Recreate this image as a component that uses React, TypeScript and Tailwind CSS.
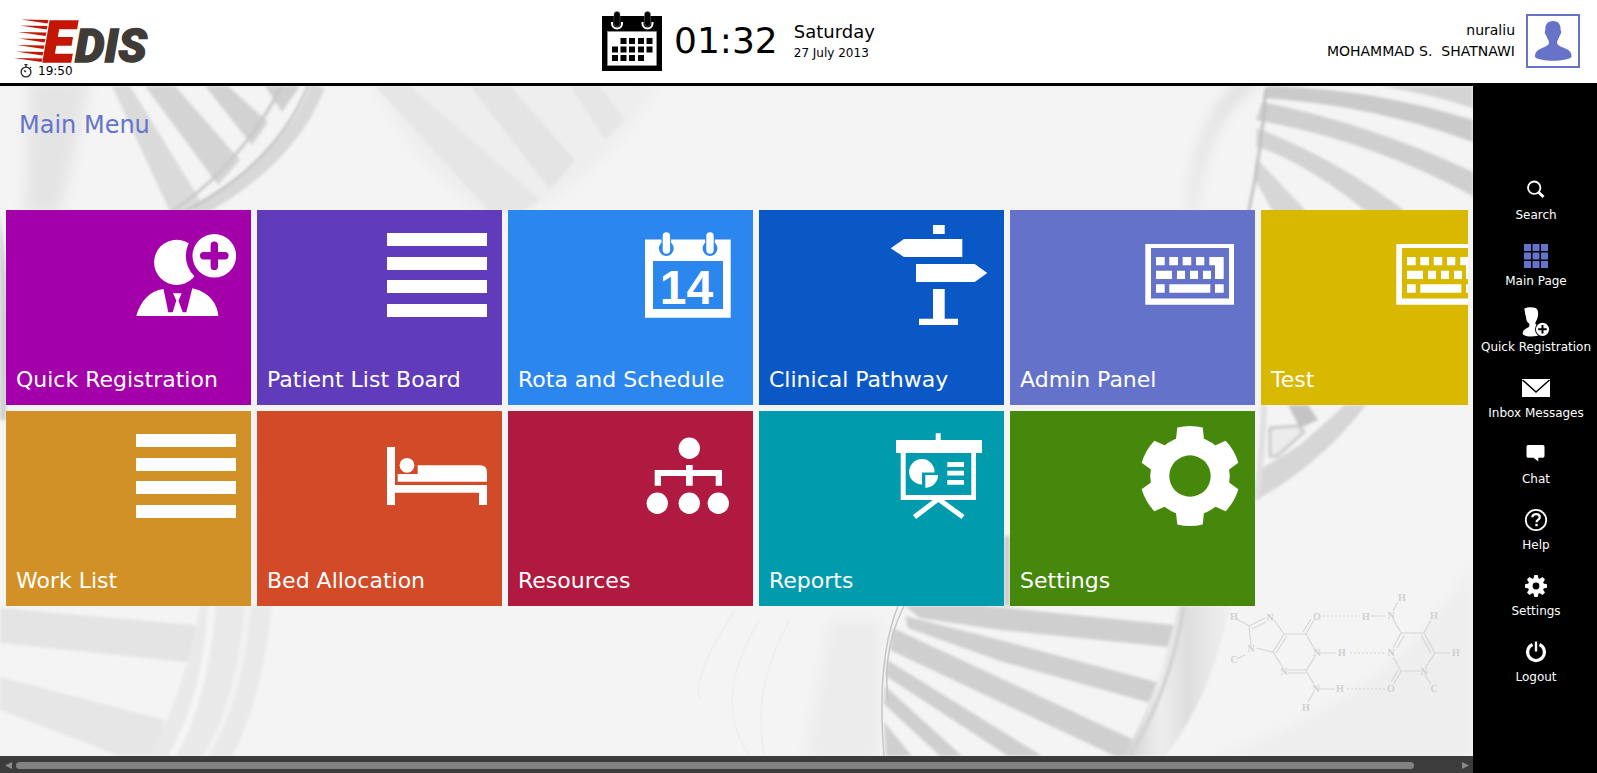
import type { ReactNode } from 'react';

function RegisterIcon() {
  return (
    <>
      <defs>
        <mask id="head-cut">
          <rect width="100" height="100" fill="#fff" />
          <circle cx="78.3" cy="30.8" r="28.5" fill="#000" />
        </mask>
      </defs>
      <circle cx="40.7" cy="37.3" r="22.6" mask="url(#head-cut)" />
      <path
        fillRule="evenodd"
        d="M78.3 9a21.8 21.8 0 1 0 0 43.6a21.8 21.8 0 1 0 0-43.6zM74.6 20.2a3.7 3.7 0 0 1 7.4 0v6.9h6.9a3.7 3.7 0 0 1 0 7.4h-6.9v6.9a3.7 3.7 0 0 1-7.4 0v-6.9h-6.9a3.7 3.7 0 0 1 0-7.4h6.9z"
      />
      <path d="M.3 91C4.5 76 14 65.5 27.5 64L32.3 87.3H36.7L40.3 75.5L37 68.3H45.7L42.5 75.5L46.7 87.3H50.3L56.3 63.3C71 66.5 81.5 77 82.3 91z" />
    </>
  );
}

function ListIcon() {
  return (
    <>
      <rect y="8" width="100" height="13" />
      <rect y="32" width="100" height="13" />
      <rect y="55" width="100" height="13" />
      <rect y="79" width="100" height="13" />
    </>
  );
}

function ScheduleIcon() {
  return (
    <>
      <path fillRule="evenodd" d="M7 14.5H92.7V92.7H7zM15 36V84H85V36z" />
      <g fill="#2b87ee">
        <circle cx="28.3" cy="23.5" r="7.4" />
        <circle cx="72" cy="23.5" r="7.4" />
        <rect x="23.5" y="10" width="9.6" height="14" />
        <rect x="67.2" y="10" width="9.6" height="14" />
      </g>
      <rect x="24.7" y="7.3" width="7.4" height="21.5" rx="3.7" />
      <rect x="68.3" y="7.3" width="7.4" height="21.5" rx="3.7" />
      <text
        x="48.5"
        y="78.5"
        textAnchor="middle"
        className="text-[48px] font-bold [font-family:'Liberation_Sans',sans-serif]"
      >
        14
      </text>
    </>
  );
}

function SignpostIcon() {
  return (
    <>
      <rect x="44" width="11.7" height="9" />
      <path d="M1.7 23.3L15 14H73.3V32H15z" />
      <path d="M27 39H85.7L98.3 48L85.7 57H27z" />
      <path d="M44 64H55.7V93.7H69V100H30V93.7H44z" />
    </>
  );
}

function KeyboardIcon() {
  return (
    <>
      <path fillRule="evenodd" d="M5.3 19H94V79.7H5.3zM11 23V73.5H89V23z" />
      <path d="M16 32h8.7v8.3H16zM29.3 32h8.7v8.3h-8.7zM42.7 32h8.5v8.3h-8.5zM56 32h8.3v8.3H56zM69.3 32H83.7V54H75V40.3H69.3z" />
      <path d="M16 45.7h16V54H16zM37 45.7h8V54h-8zM50 45.7h8V54h-8zM63 45.7h8V54h-8z" />
      <path d="M16 59.3h8.7v8.4H16zM29.3 59.3h41v8.4h-41zM75 59.3h8.7v8.4H75z" />
    </>
  );
}

function BedIcon() {
  return (
    <>
      <path d="M0 21H8V59H100V79H92V66.7H8V79H0z" />
      <circle cx="20" cy="39.3" r="7.4" />
      <path d="M10.7 48H30.7V39.3H93Q100 39.3 100 46.5V55.7H10.7z" />
    </>
  );
}

function OrgIcon() {
  return (
    <>
      <circle cx="51.3" cy="22.3" r="10.7" />
      <path d="M48 39H54.7V44H84V59.7H77.7V50H54.7V59.7H48V50H23V59.7H16.7V44H48z" />
      <circle cx="19.3" cy="77.3" r="10.7" />
      <circle cx="51.3" cy="77.3" r="10.7" />
      <circle cx="80.3" cy="77.3" r="10.7" />
    </>
  );
}

function PresentationIcon() {
  return (
    <>
      <path
        fillRule="evenodd"
        d="M46.7 7.3H51.7V14H93V27H87V74H11.7V27H7V14H46.7zM16.7 27V69H82.3V27z"
      />
      <path d="M49.3 73L25.5 91M49.3 73L74 91" stroke="currentColor" strokeWidth="5" />
      <path d="M33 46.5V58.5A12.7 12.7 0 1 1 45.5 46.5z" />
      <path d="M36.3 49H49A12.7 12.7 0 0 1 36.3 61.8z" />
      <path d="M58.3 36H75v5H58.3zM58.3 44.7H75v4.8H58.3zM58.3 54H75v4.8H58.3z" />
    </>
  );
}

function GearIcon() {
  const tooth = 'M-14.5-32L-12.7-48.5Q0-51.5 12.7-48.5L14.5-32z';
  return (
    <>
      <defs>
        <mask id="gear-hole">
          <rect width="100" height="100" fill="#fff" />
          <circle cx="50" cy="50" r="20.7" fill="#000" />
        </mask>
      </defs>
      <g mask="url(#gear-hole)">
        <g transform="translate(50 50)">
          <circle r="39.8" />
          {[0, 60, 120, 180, 240, 300].map((angle) => (
            <path key={angle} d={tooth} transform={`rotate(${angle})`} />
          ))}
        </g>
      </g>
    </>
  );
}

type Tile = { label: string; color: string; icon: () => ReactNode };

const tileRows: Tile[][] = [
  [
    { label: 'Quick Registration', color: 'bg-[#a400aa]', icon: RegisterIcon },
    { label: 'Patient List Board', color: 'bg-[#603bba]', icon: ListIcon },
    { label: 'Rota and Schedule', color: 'bg-[#2b87ee]', icon: ScheduleIcon },
    { label: 'Clinical Pathway', color: 'bg-[#0a58c6]', icon: SignpostIcon },
    { label: 'Admin Panel', color: 'bg-[#6473c9]', icon: KeyboardIcon },
    { label: 'Test', color: 'bg-[#d9b800]', icon: KeyboardIcon },
  ],
  [
    { label: 'Work List', color: 'bg-[#d29126]', icon: ListIcon },
    { label: 'Bed Allocation', color: 'bg-[#d24a27]', icon: BedIcon },
    { label: 'Resources', color: 'bg-[#b11a40]', icon: OrgIcon },
    { label: 'Reports', color: 'bg-[#009cae]', icon: PresentationIcon },
    { label: 'Settings', color: 'bg-[#46880c]', icon: GearIcon },
  ],
];

function MenuTile({ label, color, icon: Icon }: Tile) {
  return (
    <button
      type="button"
      className={`flex h-[195px] w-[245px] shrink-0 flex-col justify-between pt-[15px] pr-[15px] pb-[9px] pl-2.5 text-left text-white ${color}`}
    >
      <svg viewBox="0 0 100 100" className="size-[100px] self-end" fill="currentColor" aria-hidden="true">
        <Icon />
      </svg>
      <span className="text-[22px] leading-8 whitespace-nowrap">{label}</span>
    </button>
  );
}

function SearchGlyph() {
  return (
    <svg width="30" height="30" viewBox="0 0 30 30" fill="none" stroke="currentColor" aria-hidden="true">
      <circle cx="13.2" cy="12.7" r="6.2" strokeWidth="1.8" />
      <path d="M17.8 17.5L22.5 22" strokeWidth="3" />
    </svg>
  );
}

function GridGlyph() {
  return (
    <svg width="30" height="30" viewBox="0 0 30 30" fill="#6673ca" aria-hidden="true">
      {[3, 11.5, 20].map((y) => [3, 11.5, 20].map((x) => <rect key={`${x}-${y}`} x={x} y={y} width="7" height="7" />))}
    </svg>
  );
}

function PersonAddGlyph() {
  return (
    <svg width="30" height="30" viewBox="0 0 30 30" fill="currentColor" aria-hidden="true">
      <path d="M3.5 1.5C7-.3 14.5-.5 16.3 2.5C17.5 5 17.3 8.500 16.600 10.500C16 13 14.500 14.500 14.300 16.500C15 18.500 18.500 18.500 20 19.500V28C14 30 5 30 2 27.500C1 25 3 22.500 6 21C8.500 20 9 18 8 16.500C5.500 14.500 5 12 5 9.500C4 7.500 4 5.500 3.800 4C3.500 3 3.200 2 3.500 1.500z" />
      <circle cx="21.5" cy="22.3" r="7.6" fill="#000" />
      <circle cx="21.5" cy="22.3" r="6.6" />
      <path d="M21.5 18V26.600M17.200 22.300H25.800" stroke="#000" strokeWidth="2" />
    </svg>
  );
}

function MailGlyph() {
  return (
    <svg width="30" height="30" viewBox="0 0 30 30" aria-hidden="true">
      <rect x="1" y="6" width="28" height="18" fill="currentColor" />
      <path d="M1.5 7L15 19L28.5 7" fill="none" stroke="#000" strokeWidth="1.5" />
    </svg>
  );
}

function ChatGlyph() {
  return (
    <svg width="30" height="30" viewBox="0 0 30 30" fill="currentColor" aria-hidden="true">
      <path d="M7 6H22Q23.5 6 23.5 7.5V17Q23.5 18.7 22 18.7H17.3V22.5L12.500 18.700H7Q5.500 18.700 5.500 17V7.500Q5.500 6 7 6z" />
    </svg>
  );
}

function HelpGlyph() {
  return (
    <svg width="30" height="30" viewBox="0 0 30 30" fill="none" stroke="currentColor" aria-hidden="true">
      <circle cx="15" cy="15" r="10.2" strokeWidth="1.8" />
      <path d="M11.3 12.2C11.3 8.2 18.8 8.2 18.8 12.3C18.8 14.7 15.5 14.7 15.5 17.3" strokeWidth="2.3" />
      <path d="M14.3 18.8H16.7V21.2H14.3z" fill="currentColor" stroke="none" />
    </svg>
  );
}

function CogGlyph() {
  return (
    <svg width="30" height="30" viewBox="0 0 30 30" aria-hidden="true">
      <g transform="translate(15 15)" fill="currentColor">
        <circle r="8" />
        {[0, 45, 90, 135, 180, 225, 270, 315].map((angle) => (
          <path key={angle} d="M-2.8-6L-1.7-11H1.7L2.8-6z" transform={`rotate(${angle})`} />
        ))}
        <circle r="3.4" fill="#000" />
      </g>
    </svg>
  );
}

function PowerGlyph() {
  return (
    <svg width="30" height="30" viewBox="0 0 30 30" fill="none" stroke="currentColor" aria-hidden="true">
      <path d="M11.500 7.500A8.400 8.400 0 1 0 18.500 7.500" strokeWidth="3.200" />
      <path d="M15 4.500V14.500" strokeWidth="2.400" />
    </svg>
  );
}

const sideItems: { label: string; icon: () => ReactNode }[] = [
  { label: 'Search', icon: SearchGlyph },
  { label: 'Main Page', icon: GridGlyph },
  { label: 'Quick Registration', icon: PersonAddGlyph },
  { label: 'Inbox Messages', icon: MailGlyph },
  { label: 'Chat', icon: ChatGlyph },
  { label: 'Help', icon: HelpGlyph },
  { label: 'Settings', icon: CogGlyph },
  { label: 'Logout', icon: PowerGlyph },
];

function Logo() {
  const streaks = [
    [21, 48.5, 19.5],
    [20, 47.5, 25.5],
    [18, 46.5, 32],
    [19, 45.5, 38.5],
    [17, 44.5, 45],
    [16, 43.5, 51.5],
    [14, 42.5, 58],
  ];
  return (
    <svg width="150" height="64" viewBox="0 0 150 64" className="overflow-visible" role="img" aria-label="EDIS">
      <g fill="#c41605">
        {streaks.map(([x1, x2, y]) => (
          <path key={y} d={`M${x1} ${y}L${x2} ${y + 0.5}L${x2 - 1} ${y + 4}z`} />
        ))}
      </g>
      <text y="61.5" strokeWidth="1.4" className="italic [font-family:Roboto,sans-serif] [font-weight:900]">
        <tspan x="43" className="fill-[#c41605] stroke-[#c41605] text-[58px]">E</tspan>
        <tspan x="75" className="fill-[#403b37] stroke-[#403b37] text-[47px]">DIS</tspan>
      </text>
    </svg>
  );
}

function Stopwatch() {
  return (
    <svg width="12" height="14" viewBox="0 0 12 14" fill="none" stroke="#222" aria-hidden="true">
      <circle cx="6" cy="8" r="4.9" strokeWidth="1.3" />
      <path d="M4.5.7H7.5M6 .7V3M10 3L11 4M6 8L4 6.5" strokeWidth="1.3" />
    </svg>
  );
}

function HeaderCalendar() {
  return (
    <svg viewBox="0 0 60 60" className="size-[60px] overflow-visible" aria-hidden="true">
      <rect y="4" width="60" height="55" />
      <rect x="5.5" y="19.5" width="49" height="34" fill="#fff" stroke="#999" strokeWidth=".5" />
      <path d="M10 10V11.5A5 5 0 0 0 20 11.5V10" fill="none" stroke="#fff" strokeWidth="2" />
      <path d="M40.5 10V11.5A5 5 0 0 0 50.5 11.5V10" fill="none" stroke="#fff" strokeWidth="2" />
      <rect x="12" y="-.5" width="6" height="15" rx="3" stroke="#777" strokeWidth=".5" />
      <rect x="42.5" y="-.5" width="6" height="15" rx="3" stroke="#777" strokeWidth=".5" />
      <path d="M18.500 26h6v6h-6zM27 26h6v6h-6zM36 26h6v6h-6zM44.500 26h6v6h-6zM10 34.500h6v6h-6zM18.500 34.500h6v6h-6zM27 34.500h6v6h-6zM36 34.500h6v6h-6zM44.500 34.500h6v6h-6zM10 43h6v6h-6zM18.500 43h6v6h-6zM27 43h6v6h-6zM36 43h6v6h-6z" />
    </svg>
  );
}

function Avatar() {
  return (
    <svg viewBox="0 0 50 50" className="size-[54px] shrink-0 border-2 border-[#6673c8]" fill="#6673c8" aria-hidden="true">
      <path d="M25 5C31 5 33 9 32.500 14C33.500 14.500 33.500 18 32 19C31 22.500 29 24 29 27C29.500 30 35 31 39.500 33.500C43 35.500 43.500 38.500 43.500 41C38 46 12 46 7 41C7 38.500 7.500 35.500 11 33.500C15.500 31 20.500 30 21 27C21 24 19 22.500 18 19C16.500 18 16.500 14.500 17.500 14C17 9 19 5 25 5z" />
    </svg>
  );
}

function Helix() {
  return (
    <svg
      viewBox="0 86 1473 670"
      preserveAspectRatio="xMinYMin slice"
      className="absolute inset-0 size-full"
      aria-hidden="true"
    >
      <defs>
        <filter id="soft" x="-10%" y="-10%" width="120%" height="120%">
          <feGaussianBlur stdDeviation="1.6" />
        </filter>
        <filter id="haze" x="-20%" y="-20%" width="140%" height="140%">
          <feGaussianBlur stdDeviation="7" />
        </filter>
        <linearGradient id="strand" x1="0" y1="0" x2="1" y2="0">
          <stop offset="0" stopColor="#d2d2d2" />
          <stop offset=".35" stopColor="#ededed" />
          <stop offset=".6" stopColor="#dedede" />
          <stop offset="1" stopColor="#f0f0f0" />
        </linearGradient>
      </defs>
      <rect y="86" width="1473" height="670" fill="#f4f4f4" />

      <g filter="url(#haze)">
        <path d="M30 80H90L60 215H25z" fill="#e4e4e4" />
        <path d="M370 80H660Q620 160 530 215H480Q410 160 370 80z" fill="#eeeeee" />
        <path d="M1195 215Q1200 120 1262 80H1240Q1190 130 1190 215z" fill="#dcdcdc" />
        <path d="M830 620H880L880 760H805z" fill="#ececec" />
        <path d="M1473 560Q1400 700 1200 760H1473z" fill="#eeeeee" />
      </g>

      <g filter="url(#soft)">
        <path d="M0 608L195 625V663L0 643z" fill="#e4e4e4" />
        <path d="M0 677L165 720L155 756H120L0 710z" fill="#e6e6e6" />
        <path d="M200 606H272Q262 700 232 756H150Q185 690 200 606z" fill="#e9e9e9" />
        <path d="M212 606Q205 700 172 756" fill="none" stroke="#f5f5f5" strokeWidth="7" />
        <path d="M248 606Q240 700 206 756" fill="none" stroke="#f2f2f2" strokeWidth="6" />

        <path d="M112 86H130L200 200L190 212H170z" fill="#dadada" />
        <path d="M145 86H175L240 160L218 185z" fill="#d4d4d4" />
        <path d="M205 86H228L268 122L252 145z" fill="#d2d2d2" />
        <path d="M265 86H300L282 112z" fill="#d0d0d0" />
        <path d="M318 86Q290 160 195 212" fill="none" stroke="#d8d8d8" strokeWidth="14" />
        <path d="M308 86Q275 165 184 212" fill="none" stroke="#bdbdbd" strokeWidth="2" />
        <path d="M282 86Q240 165 172 212" fill="none" stroke="#c8c8c8" strokeWidth="3" />
        <path d="M0 215Q12 300 6 420H0z" fill="#d0d0d0" />
        <path d="M375 86H410L540 200L520 212H490z" fill="#e6e6e6" />
        <path d="M470 86H510L575 160L550 190z" fill="#e4e4e4" />
        <path d="M570 86H600L625 120L605 140z" fill="#e6e6e6" />

        <path d="M1268 86Q1370 88 1473 120V142Q1370 104 1262 98z" fill="#cacaca" />
        <path d="M1262 102Q1370 124 1473 172V196Q1370 140 1256 120z" fill="#cfcfcf" />
        <path d="M1257 128Q1340 160 1410 215H1370Q1310 165 1256 146z" fill="#d3d3d3" />
        <path d="M1256 158L1310 215H1275L1254 178z" fill="#d6d6d6" />
        <path d="M1380 86H1473V108Q1430 94 1380 86z" fill="#d4d4d4" />
        <path d="M1266 88Q1262 150 1248 215" fill="none" stroke="#c0c0c0" strokeWidth="3" />

        <path d="M1366 405Q1320 465 1256 500V472L1300 445L1345 405z" fill="#d6d6d6" />
        <path d="M1288 405H1308L1318 420L1300 428z" fill="#c4c4c4" />
        <path d="M1270 428V456H1277L1304 432L1298 426z" fill="#ececec" stroke="#cacaca" strokeWidth="3" />
        <path d="M1264 405Q1262 460 1256 500" fill="none" stroke="#e0e0e0" strokeWidth="6" />
        <path d="M1004 536H1010V606H1004z" fill="#cdcdcd" />

        <g fill="#cfcfcf">
          <path d="M905 606H985L1174 625L1168 647L1000 630L920 618z" />
          <path d="M905 616L1000 640L1160 683L1154 704L1000 661L908 628z" />
          <path d="M893 628L1000 678L1134 740L1128 756H1115L1000 702L890 650z" />
          <path d="M887 660L1042 756H1008L886 676z" />
          <path d="M885 686L962 756H940L884 704z" />
          <path d="M884 722L912 756H886z" />
        </g>
        <path d="M1178 606H1230Q1210 700 1165 756H1124Q1160 690 1178 606z" fill="url(#strand)" />
        <path d="M1184 606Q1170 690 1130 756" fill="none" stroke="#d2d2d2" strokeWidth="4" />
      </g>
      <path d="M898 606Q876 660 884 756M904 606Q882 650 888 700" fill="none" stroke="#c6c6c6" strokeWidth="1.5" />
      <path
        d="M735 610Q690 680 700 700M760 620Q710 700 750 756M790 620Q750 690 765 756"
        fill="none"
        stroke="#efefef"
        strokeWidth="2"
      />

      <g fill="none" stroke="#d6d6d6" strokeWidth="1.2">
        <path d="M1237 619L1249 626L1251 645M1249 626L1265 618M1252 629L1266 622M1274 620L1284 634L1273 652L1256 648M1245 655L1237 659" />
        <path d="M1284 634H1306L1315 650M1287 636L1276 653M1273 652L1283 668M1288 670H1306M1288 673H1306M1306 671L1315 656M1306 634L1314 620M1303 632L1311 619M1320 653H1336M1306 671L1314 684M1319 689H1335M1314 692L1308 702" />
        <path d="M1371 616H1386M1393 611L1398 602M1393 619L1401 633H1424L1435 653L1425 668M1421 635L1431 653M1401 633L1393 648M1404 636L1397 648M1393 657L1401 671H1420M1401 671L1394 684M1398 670L1391 682M1424 633L1431 620M1435 653H1450M1425 675L1431 684" />
        <path d="M1323 616H1360M1350 653H1386M1347 689H1386" strokeDasharray="2 2" />
      </g>
      <g fill="#d0d0d0" textAnchor="middle" className="text-[10px] font-bold [font-family:'Liberation_Serif',serif]">
        <text x="1234" y="620">H</text>
        <text x="1270" y="621">N</text>
        <text x="1317" y="620">O</text>
        <text x="1366" y="620">H</text>
        <text x="1391" y="619">N</text>
        <text x="1402" y="601">H</text>
        <text x="1434" y="619">H</text>
        <text x="1251" y="652">N</text>
        <text x="1234" y="663">C</text>
        <text x="1317" y="656">N</text>
        <text x="1342" y="656">H</text>
        <text x="1391" y="656">N</text>
        <text x="1456" y="656">H</text>
        <text x="1284" y="675">N</text>
        <text x="1424" y="675">N</text>
        <text x="1316" y="692">N</text>
        <text x="1340" y="692">H</text>
        <text x="1391" y="692">O</text>
        <text x="1434" y="692">C</text>
        <text x="1306" y="711">H</text>
      </g>
    </svg>
  );
}

export default function App() {
  return (
    <div className="flex min-h-screen flex-col bg-white text-black [font-family:Verdana,'DejaVu_Sans',sans-serif]">
      <header className="flex h-[86px] items-start justify-between border-b-[3px] border-black pr-[17px]">
        <div className="flex flex-col">
          <Logo />
          <div className="flex items-center gap-1.5 pl-5 text-xs leading-3">
            <Stopwatch />
            <span>19:50</span>
          </div>
        </div>
        <div className="flex items-start pt-3">
          <HeaderCalendar />
          <span className="ml-3 text-4xl leading-[58px]">01:32</span>
          <div className="ml-4 flex flex-col pt-2">
            <span className="text-lg leading-6">Saturday</span>
            <span className="text-xs leading-[18px]">27 July 2013</span>
          </div>
        </div>
        <div className="flex items-center gap-[11px] pt-3.5">
          <div className="flex flex-col text-right text-sm leading-[21px]">
            <span>nuraliu</span>
            <span className="whitespace-pre">MOHAMMAD S.  SHATNAWI</span>
          </div>
          <Avatar />
        </div>
      </header>

      <div className="flex flex-1">
        <main className="flex min-w-0 flex-1 flex-col">
          <div className="relative flex-1 overflow-hidden bg-[#f4f4f4]">
            <Helix />
            <div className="relative flex flex-col pr-[5px]">
              <h1 className="h-[124px] pt-[23px] pl-[19px] text-2xl leading-8 text-[#6673ca]">Main Menu</h1>
              <div className="flex flex-col gap-1.5 overflow-hidden pl-1.5">
                {tileRows.map((row, i) => (
                  <div key={i} className="flex gap-1.5">
                    {row.map((tile) => (
                      <MenuTile key={tile.label} {...tile} />
                    ))}
                  </div>
                ))}
              </div>
            </div>
          </div>
          <div className="flex h-[17px] items-center bg-[#3c3c3c] pt-0.5 text-[#8a8a8a]">
            <button type="button" aria-label="Scroll left" className="flex w-4 justify-center">
              <svg width="7" height="7" viewBox="0 0 7 7" fill="currentColor" aria-hidden="true">
                <path d="M7 0V7L0 3.5z" />
              </svg>
            </button>
            <div className="flex-1">
              <div className="h-[7px] w-[97%] rounded-full bg-[#828282]" />
            </div>
            <button type="button" aria-label="Scroll right" className="flex w-4 justify-center">
              <svg width="7" height="7" viewBox="0 0 7 7" fill="currentColor" aria-hidden="true">
                <path d="M0 0V7L7 3.5z" />
              </svg>
            </button>
          </div>
        </main>

        <nav className="flex w-[124px] shrink-0 flex-col bg-black pt-20 text-white">
          {sideItems.map(({ label, icon: Icon }) => (
            <a key={label} href="#" className="flex h-[66px] flex-col items-center gap-px pt-[9px] pl-0.5">
              <Icon />
              <span className="text-xs leading-[18px] whitespace-nowrap">{label}</span>
            </a>
          ))}
        </nav>
      </div>
    </div>
  );
}
